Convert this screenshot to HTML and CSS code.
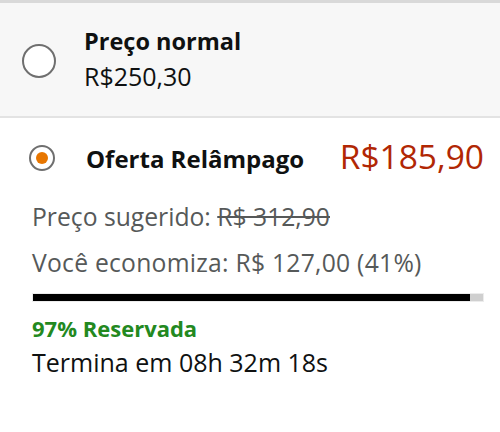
FILE: index.html
```html
<!DOCTYPE html>
<html lang="pt-BR">
<head>
<meta charset="utf-8">
<link rel="stylesheet" href="styles.css">
</head>
<body>
<div class="offer offer-normal">
  <span class="radio"></span>
  <div class="offer-text">
    <div class="offer-title">Preço normal</div>
    <div class="offer-price">R$250,30</div>
  </div>
</div>
<div class="offer offer-flash">
  <div class="flash-head">
    <span class="radio radio-checked"><span class="radio-dot"></span></span>
    <span class="flash-title">Oferta Relâmpago</span>
    <span class="flash-price">R$185,90</span>
  </div>
  <div class="detail detail-first">Preço sugerido: <span class="strike">R$ 312,90</span></div>
  <div class="detail detail-wide">Você economiza: R$ 127,00 (41%)</div>
  <div class="bar"><div class="bar-fill" style="width:97%"></div></div>
  <div class="claimed">97% Reservada</div>
  <div class="ends">Termina em 08h 32m 18s</div>
</div>
</body>
</html>
```
FILE: styles.css
```css
html, body {
  margin: 0;
  padding: 0;
  background: #fff;
}
body {
  font-family: "Open Sans", "Noto Sans", sans-serif;
  color: #0f1111;
  width: 500px;
}
.offer-normal {
  display: flex;
  align-items: flex-start;
  background: #f7f7f7;
  border-top: 3px solid #d9d9d9;
  border-bottom: 2px solid #e3e3e3;
  height: 113px;
  padding-left: 22px;
}
.radio {
  width: 30px;
  height: 30px;
  border: 2.5px solid #6f6f6f;
  border-radius: 50%;
  background: #fff;
  display: inline-flex;
  align-items: center;
  justify-content: center;
  flex: none;
}
.offer-normal .radio {
  margin-top: 41px;
  margin-right: 28px;
}
.offer-text {
  display: flex;
  flex-direction: column;
  padding-top: 22px;
}
.offer-title {
  font-weight: 700;
  font-size: 23.5px;
  line-height: 32px;
}
.offer-price {
  font-size: 25px;
  line-height: 36px;
  margin-top: 1px;
}
.offer-flash {
  padding: 20px 16px 0 32px;
}
.flash-head {
  display: flex;
  align-items: center;
  height: 40px;
}
.radio-checked {
  width: 22px;
  height: 22px;
  margin-left: -3px;
  margin-right: 31px;
}
.radio-dot {
  width: 12px;
  height: 12px;
  border-radius: 50%;
  background: #e77600;
}
.flash-title {
  font-weight: 700;
  font-size: 24px;
}
.flash-price {
  color: #b12704;
  font-size: 33.5px;
  margin-left: auto;
  margin-top: -4px;
}
.detail {
  color: #565959;
  font-size: 24.7px;
  line-height: 46px;
}
.detail-wide {
  letter-spacing: 0.25px;
}
.detail-first {
  margin-top: 16px;
}
.strike {
  text-decoration: line-through;
}
.bar {
  margin-top: 7px;
  height: 7px;
  background: #cfcfcf;
  border: 1px solid #ececec;
}
.bar-fill {
  height: 100%;
  background: #000;
}
.claimed {
  margin-top: 11px;
  color: #23891f;
  font-weight: 700;
  font-size: 22px;
  line-height: 30px;
}
.ends {
  font-size: 25px;
  line-height: 34px;
  margin-top: 2px;
}
```
